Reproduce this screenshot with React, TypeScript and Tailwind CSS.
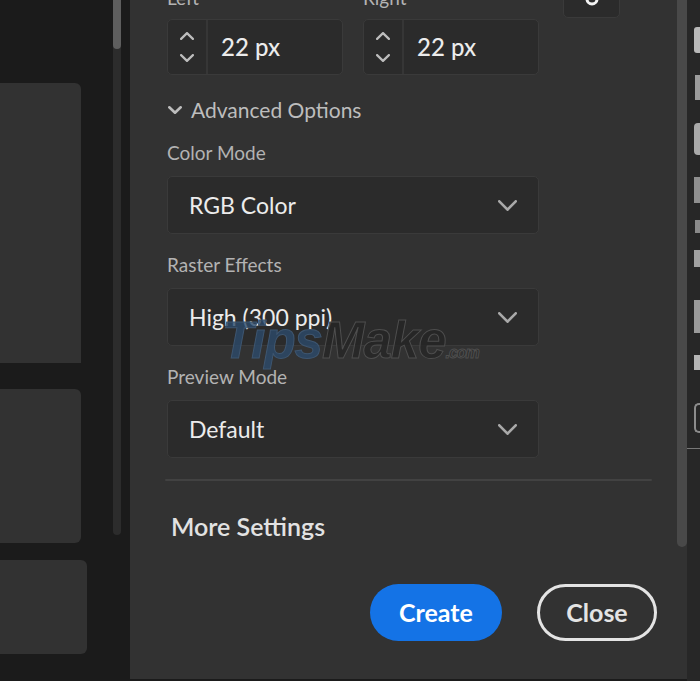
const font = { fontFamily: "Lato, 'Open Sans', sans-serif" };

function Chevron({ w, h, up, stroke = 2.5, className }: { w: number; h: number; up?: boolean; stroke?: number; className?: string }) {
  const s = stroke / 2;
  const pts = up ? `${s},${h - s} ${w / 2},${s} ${w - s},${h - s}` : `${s},${s} ${w / 2},${h - s} ${w - s},${s}`;
  return (
    <svg width={w} height={h} viewBox={`0 0 ${w} ${h}`} className={className}>
      <polyline points={pts} fill="none" stroke="currentColor" strokeWidth={stroke} strokeLinecap="round" strokeLinejoin="round" />
    </svg>
  );
}

function Stepper({ label, value }: { label: string; value: string }) {
  return (
    <div className="flex w-[176px] flex-col">
      <div className="mb-[9px] mt-[-14px] h-[24px] text-[19px] leading-[24px] text-[#b3b3b3]">{label}</div>
      <div className="flex h-[56px] overflow-hidden rounded-[5px] border border-[#3a3a3a] bg-[#2b2b2b]">
        <div className="flex w-[40px] flex-col items-center justify-center gap-[14px] border-r-2 border-[#363636] text-[#bdbdbd]">
          <Chevron w={14} h={8} up stroke={2.2} />
          <Chevron w={14} h={8} stroke={2.2} />
        </div>
        <div className="flex flex-1 items-center pl-[13px] text-[24px] font-medium text-[#ececec]">{value}</div>
      </div>
    </div>
  );
}

function Select({ label, value }: { label: string; value: string }) {
  return (
    <div className="flex flex-col">
      <div className="h-[24px] text-[19px] leading-[24px] text-[#b3b3b3]">{label}</div>
      <div className="mt-[11px] flex h-[58px] w-[372px] items-center justify-between rounded-[5px] border border-[#3a3a3a] bg-[#2b2b2b] pl-[21px] pr-[21px]">
        <span className="text-[23px] text-[#ececec]">{value}</span>
        <Chevron w={19} h={11} stroke={2.6} className="text-[#a9a9a9]" />
      </div>
    </div>
  );
}

export default function App() {
  return (
    <div className="flex h-[681px] w-[700px] overflow-hidden bg-[#1b1b1b]" style={font}>
      {/* document previews on the left */}
      <div className="flex w-[130px] shrink-0">
        <div className="flex w-[113px] flex-col">
          <div className="mt-[83px] h-[280px] w-[81px] rounded-tr-[6px] bg-[#323232]" />
          <div className="mt-[26px] h-[154px] w-[81px] rounded-r-[6px] bg-[#323232]" />
          <div className="mt-[17px] h-[94px] w-[87px] rounded-r-[6px] bg-[#323232]" />
        </div>
        <div className="flex h-[535px] w-[8px] flex-col rounded-b-full bg-[#2c2c2c]">
          <div className="h-[49px] rounded-b-full bg-[#5e5e5e]" />
        </div>
      </div>

      {/* settings panel */}
      <div className="relative flex h-[679px] w-[557px] shrink-0 bg-[#323232]">
        <div className="flex flex-1 flex-col pl-[37px]">
          <div className="flex items-start">
            <Stepper label="Left" value="22 px" />
            <div className="ml-[20px]">
              <Stepper label="Right" value="22 px" />
            </div>
            <div className="ml-[24px] mt-[-22px] flex h-[40px] w-[57px] justify-center rounded-[5px] border border-[#3a3a3a] bg-[#2b2b2b]">
              <svg width="16" height="24" viewBox="0 0 16 24" className="mt-[8px]">
                <path d="M3 6 V12 a5 5 0 0 0 10 0 V6" fill="none" stroke="#f2f2f2" strokeWidth="3" />
              </svg>
            </div>
          </div>

          <div className="mt-[21px] flex h-[28px] items-center gap-[9px] text-[#bdbdbd]">
            <Chevron w={14} h={8} stroke={2.6} className="ml-[1px]" />
            <span className="text-[21px]">Advanced Options</span>
          </div>

          <div className="mt-[17px]">
            <Select label="Color Mode" value="RGB Color" />
          </div>
          <div className="mt-[19px]">
            <Select label="Raster Effects" value="High (300 ppi)" />
          </div>
          <div className="mt-[19px]">
            <Select label="Preview Mode" value="Default" />
          </div>

          <div className="ml-[-2px] mt-[21px] h-[2px] w-[487px] rounded-full bg-[#424242]" />

          <div className="ml-[4px] mt-[29px] text-[25px] font-semibold leading-[32px] text-[#e2e2e2]">More Settings</div>

          <div className="mr-[20px] mt-[42px] flex justify-end gap-[35px]">
            <button className="h-[57px] w-[132px] rounded-full bg-[#1473e6] text-[25px] font-bold text-white">Create</button>
            <button className="h-[57px] w-[120px] rounded-full border-[3px] border-[#e4e4e4] text-[25px] font-bold text-[#e4e4e4]">Close</button>
          </div>
        </div>

        <div className="h-[547px] w-[10px] shrink-0 rounded-b-full bg-[#494949]" />

        {/* watermark */}
        <div
          className="pointer-events-none absolute left-[92px] top-[303px] flex items-baseline text-[51px] font-bold italic tracking-[-1px]"
          style={{ fontFamily: "'Liberation Sans', Arial, sans-serif" }}
        >
          <span className="text-[#2c4a6a]/80 [-webkit-text-stroke:1px_#3e5670]">Tips</span>
          <span className="text-[#262626]/80 [-webkit-text-stroke:1px_#4e4e4e]">Make</span>
          <span className="text-[16px] text-[#2b2b2b] [-webkit-text-stroke:1px_#4e4e4e]">.com</span>
        </div>
      </div>

      {/* tool strip on the right */}
      <div className="flex h-[681px] flex-1 flex-col items-end bg-[#272727] pt-[27px]">
        <div className="h-[26px] w-[6px] rounded-l-[3px] bg-[#b9b9b9]" />
        <div className="mt-[22px] h-[25px] w-[5px] bg-[#9c9c9c]" />
        <div className="mt-[23px] h-[32px] w-[6px] rounded-l-[4px] bg-[#a9a9a9]" />
        <div className="mt-[22px] h-[26px] w-[6px] bg-[#8f8f8f]" />
        <div className="mt-[17px] h-[13px] w-[5px] bg-[#8a8a8a]" />
        <div className="mt-[17px] h-[17px] w-[6px] bg-[#a0a0a0]" />
        <div className="mt-[33px] h-[33px] w-[6px] bg-[#9a9a9a]" />
        <div className="mt-[22px] h-[15px] w-[6px] bg-[#b5b5b5]" />
        <div className="mt-[33px] h-[30px] w-[6px] rounded-l-[5px] border-2 border-r-0 border-[#8c8c8c]" />
        <div className="mt-[15px] h-[1px] w-[13px] bg-[#777777]" />
      </div>
    </div>
  );
}
